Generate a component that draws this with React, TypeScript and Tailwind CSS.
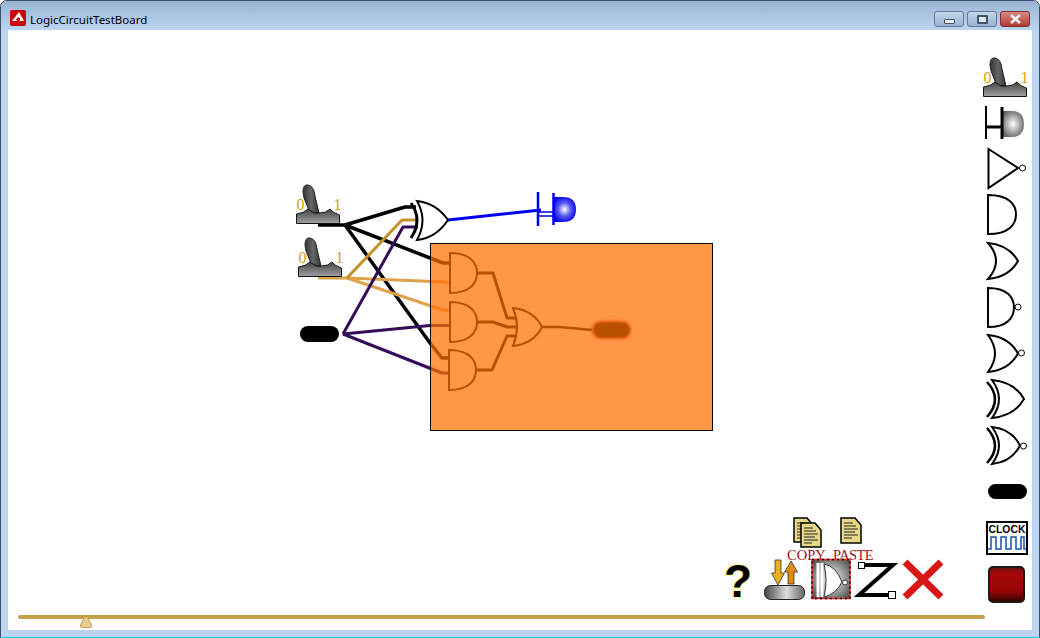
import type { ReactNode } from 'react'

// svg cut from the page, so the paths below can use page coordinates
function Slice({ x, y, w, h, children }: { x: number; y: number; w: number; h: number; children: ReactNode }) {
  return (
    <svg width={w} height={h} viewBox={`${x} ${y} ${w} ${h}`} className="block shrink-0 overflow-visible">
      {children}
    </svg>
  )
}

function Switch({ x, y }: { x: number; y: number }) {
  return (
    <g transform={`translate(${x} ${y})`}>
      <path d="M7 10 Q7 2 12 3 Q18 4 19 14 L23 31 L14 31 L8 16 Z" fill="url(#lever)" stroke="#222" strokeWidth="1" />
      <path d="M0.5 41.5 V32 Q8 31 12 27 L18 31 L24 31 Q30 31 34 27 Q37 31 43.5 33 V41.5 Z" fill="url(#body)" stroke="#111" strokeWidth="1" />
      <text x="0.5" y="28" fontFamily="'Liberation Serif', serif" fontSize="16" fill="#d4a000">0</text>
      <text x="37.5" y="28" fontFamily="'Liberation Serif', serif" fontSize="16" fill="#d4a000">1</text>
    </g>
  )
}

function And({ x, y, w, h }: { x: number; y: number; w: number; h: number }) {
  return <path d={`M${x} ${y} V${y + h} C${x + w * 0.75} ${y + h} ${x + w} ${y + h * 0.75} ${x + w} ${y + h / 2} C${x + w} ${y + h * 0.25} ${x + w * 0.75} ${y} ${x} ${y} Z`} fill="#fff" stroke="#000" strokeWidth="2" />
}

function Or({ x, y, w, h, back }: { x: number; y: number; w: number; h: number; back: number }) {
  const m = y + h / 2
  return <path d={`M${x} ${y} Q${x + w * 0.7} ${y + 2} ${x + w} ${m} Q${x + w * 0.7} ${y + h - 2} ${x} ${y + h} Q${x + back * 2} ${m} ${x} ${y} Z`} fill="#fff" stroke="#000" strokeWidth="2" />
}

function Bubble({ x, y }: { x: number; y: number }) {
  return <circle cx={x} cy={y} r="3" fill="#fff" stroke="#000" strokeWidth="1" />
}

function Defs() {
  return (
    <svg width="0" height="0" className="absolute">
      <defs>
        <linearGradient id="lever" x1="0" y1="0" x2="1" y2="0">
          <stop offset="0" stopColor="#333" />
          <stop offset="0.5" stopColor="#666" />
          <stop offset="1" stopColor="#333" />
        </linearGradient>
        <linearGradient id="body" x1="0" y1="0" x2="0" y2="1">
          <stop offset="0" stopColor="#444" />
          <stop offset="1" stopColor="#a0a0a0" />
        </linearGradient>
        <radialGradient id="blueLed" cx="0.5" cy="0.5" r="0.55">
          <stop offset="0" stopColor="#fff" />
          <stop offset="0.5" stopColor="#5a5af0" />
          <stop offset="1" stopColor="#0000f0" />
        </radialGradient>
        <radialGradient id="grayLed" cx="0.5" cy="0.5" r="0.55">
          <stop offset="0" stopColor="#fff" />
          <stop offset="1" stopColor="#666" />
        </radialGradient>
        <linearGradient id="stop" x1="0" y1="0" x2="0" y2="1">
          <stop offset="0" stopColor="#6a1414" />
          <stop offset="0.2" stopColor="#a80808" />
          <stop offset="0.7" stopColor="#980606" />
          <stop offset="1" stopColor="#300303" />
        </linearGradient>
        <linearGradient id="disk" x1="0" y1="0" x2="1" y2="0">
          <stop offset="0" stopColor="#444" />
          <stop offset="0.55" stopColor="#ddd" />
          <stop offset="1" stopColor="#666" />
        </linearGradient>
        <radialGradient id="gateBg" cx="0.5" cy="0.5" r="0.75">
          <stop offset="0" stopColor="#fff" />
          <stop offset="1" stopColor="#333" />
        </radialGradient>
        <filter id="soft" x="-20%" y="-40%" width="140%" height="180%">
          <feGaussianBlur stdDeviation="1" />
        </filter>
        <filter id="softX" x="-20%" y="-20%" width="140%" height="140%">
          <feGaussianBlur stdDeviation="0.6" />
        </filter>
      </defs>
    </svg>
  )
}

function Circuit() {
  return (
    <Slice x={8} y={30} w={972} h={485}>
      {/* wires */}
      <g fill="none" strokeWidth="3" strokeLinejoin="round">
        <g stroke="#000" strokeWidth="3.5">
          <path d="M318 225 H345 L405 207 H416" />
          <path d="M345 225 L443 263 H450" />
          <path d="M345 225 L430 343 L442 358 H449" />
        </g>
        <g stroke="#dfa24c">
          <path d="M318 278 H347 L445 282 L450 283" />
          <path d="M347 278 L443 310 H450" />
        </g>
        <path d="M347 278 L402 220 H418" stroke="#c4922c" />
        <g stroke="#340c58">
          <path d="M343 334 L403 227 H418" />
          <path d="M343 334 L430 325.5 H449" />
          <path d="M343 334 L442 373 H449" />
        </g>
        <path d="M448 220 L541 210" stroke="#0000f0" />
        <g stroke="#000">
          <path d="M477 273 H493 L507 318 H516" />
          <path d="M477 322 H493 L507 327 H517" />
          <path d="M476 370 H492 L507 336 H516" />
          <path d="M542 327 H560 L592 330" strokeWidth="2.5" />
        </g>
      </g>

      <Switch x={296} y={182} />
      <Switch x={298} y={235} />
      <rect x="300" y="326" width="39" height="16" rx="8" fill="#000" />

      {/* xor */}
      <path d="M411 203 Q423 220 411 238" fill="none" stroke="#000" strokeWidth="3" />
      <path d="M417 201 Q436 203 448 220 Q436 238 417 240 Q428 220 417 201 Z" fill="#fff" stroke="#000" strokeWidth="2" />

      {/* blue led */}
      <path d="M553 197 H563 Q576 197 576 209.5 Q576 222 563 222 H553 Z" fill="url(#blueLed)" />
      <path d="M538 192 V226 M553.5 193 V225" stroke="#0000f0" strokeWidth="2.5" />
      <path d="M538 212 H553 M538 216 H553" stroke="#0000f0" strokeWidth="1.5" />

      {/* sub circuit */}
      <g>
        <And x={450} y={253} w={27} h={40} />
        <And x={450} y={302} w={27} h={40} />
        <And x={449} y={350} w={27} h={40} />
        <Or x={513} y={308} w={29} h={38} back={4} />
        <rect x="591" y="320" width="41" height="20" rx="10" fill="#ff2000" opacity="0.5" filter="url(#soft)" />
        <rect x="593" y="322" width="37" height="16" rx="8" fill="#000" filter="url(#soft)" />
      </g>
      <rect x="430.5" y="243.5" width="282" height="187" fill="#ff6f00" fillOpacity="0.72" stroke="#000" strokeWidth="1" />
    </Slice>
  )
}

function Palette() {
  return (
    <div className="flex flex-col w-[52px] shrink-0">
      <Slice x={980} y={30} w={52} h={72}><Switch x={983} y={55} /></Slice>
      <Slice x={980} y={102} w={52} h={43}>
        <path d="M1002 111 H1012 Q1024 111 1024 124 Q1024 137 1012 137 H1002 Z" fill="url(#grayLed)" />
        <path d="M986 106 V139" stroke="#000" strokeWidth="2" />
        <path d="M1002 107 V139" stroke="#000" strokeWidth="3" />
        <path d="M986 127 H1002" stroke="#000" strokeWidth="3" />
      </Slice>
      <Slice x={980} y={145} w={52} h={46}>
        <path d="M988.5 149 V188 L1018 168 Z" fill="#fff" stroke="#000" strokeWidth="2" />
        <Bubble x={1022.5} y={168} />
      </Slice>
      <Slice x={980} y={191} w={52} h={47}><And x={988} y={195} w={28} h={39} /></Slice>
      <Slice x={980} y={238} w={52} h={46}><Or x={988} y={243} w={30} h={36} back={8} /></Slice>
      <Slice x={980} y={284} w={52} h={48}>
        <And x={988} y={288} w={26} h={39} />
        <Bubble x={1018} y={307} />
      </Slice>
      <Slice x={980} y={332} w={52} h={44}>
        <Or x={988} y={335} w={30} h={37} back={7} />
        <Bubble x={1021.5} y={353} />
      </Slice>
      <Slice x={980} y={376} w={52} h={48}>
        <path d="M987 382 Q1003 399 987 417" fill="none" stroke="#000" strokeWidth="2.5" />
        <Or x={992} y={380} w={32} h={38} back={7} />
      </Slice>
      <Slice x={980} y={424} w={52} h={48}>
        <path d="M987 428 Q1003 446 987 463" fill="none" stroke="#000" strokeWidth="2.5" />
        <Or x={992} y={427} w={28} h={37} back={7} />
        <Bubble x={1023.5} y={446} />
      </Slice>
      <Slice x={980} y={472} w={52} h={40}><rect x="988" y="484" width="39" height="15" rx="7.5" fill="#000" /></Slice>
      <Slice x={980} y={512} w={52} h={48}>
        <rect x="987" y="522" width="40" height="32" fill="#fff" stroke="#000" strokeWidth="2" />
        <text x="988.5" y="533" fontFamily="'Liberation Sans', sans-serif" fontWeight="700" fontSize="11" textLength="37" lengthAdjust="spacingAndGlyphs" fill="#000">CLOCK</text>
        <path d="M988 549 H991 V537 H996 V549 H1001 V537 H1006 V549 H1011 V537 H1016 V549 H1021 V537 H1024 V549 H1026" fill="none" stroke="#1450b0" strokeWidth="1.5" />
      </Slice>
      <Slice x={980} y={560} w={52} h={50}>
        <rect x="989" y="567" width="35" height="35" rx="4" fill="url(#stop)" stroke="#1a1a1a" strokeWidth="2" />
      </Slice>
    </div>
  )
}

function Doc({ x, y, w, h }: { x: number; y: number; w: number; h: number }) {
  return (
    <g>
      <path d={`M${x} ${y} H${x + w - 6} L${x + w} ${y + 7} V${y + h} H${x} Z`} fill="#e8d888" stroke="#000" strokeWidth="1.5" />
      <path d={`M${x + 3} ${y + 5} H${x + w - 8} M${x + 3} ${y + 8} H${x + w - 5} M${x + 3} ${y + 11} H${x + w - 3} M${x + 3} ${y + 14} H${x + w - 6} M${x + 3} ${y + 17} H${x + w - 3} M${x + 3} ${y + 20} H${x + w - 9}`} stroke="#222" strokeWidth="1.2" />
    </g>
  )
}

function Toolbar() {
  return (
    <div className="flex flex-col">
      <div className="flex ml-[779px] text-[#9a1414] [font-family:'Liberation_Serif',serif]">
        <div className="flex flex-col w-[46px]">
          <Slice x={787} y={515} w={46} h={33}>
            <Doc x={794} y={518} w={19} h={24} />
            <Doc x={801} y={523} w={20} h={24} />
          </Slice>
          <div className="h-[11px] leading-[14px] text-[14.5px] whitespace-nowrap">COPY</div>
        </div>
        <div className="flex flex-col w-[41px]">
          <Slice x={833} y={515} w={41} h={33}>
            <Doc x={841} y={518} w={20} h={25} />
          </Slice>
          <div className="h-[11px] leading-[14px] text-[14.5px] tracking-[-0.6px] whitespace-nowrap">PASTE</div>
        </div>
      </div>
      <div className="flex ml-[712px]">
        <Slice x={720} y={559} w={37} h={51}>
          <text x="724" y="597" fontFamily="'Liberation Sans', sans-serif" fontWeight="700" fontSize="46" fill="#000" stroke="#fff59a" strokeWidth="2.5" paintOrder="stroke">?</text>
        </Slice>
        <Slice x={757} y={559} w={51} h={51}>
          <rect x="764.5" y="585.5" width="40" height="14" rx="6" fill="url(#disk)" stroke="#222" />
          <path d="M775 560 H781 V573 H784.5 L778 585 L771.5 573 H775 Z" fill="#e8b020" stroke="#333" strokeWidth="0.8" />
          <path d="M788 584 H794 V572 H797.5 L791 561 L784.5 572 H788 Z" fill="#e08a10" stroke="#333" strokeWidth="0.8" />
        </Slice>
        <Slice x={808} y={559} w={46} h={51}>
          <rect x="812" y="559.5" width="38" height="39" fill="url(#gateBg)" stroke="#ff2020" strokeWidth="1.5" />
          <rect x="812" y="559.5" width="38" height="39" fill="none" stroke="#000" strokeWidth="1.5" strokeDasharray="2 3" />
          <path d="M818 563 V597 M822 563 V597" stroke="#fff" strokeWidth="3" />
          <path d="M824 564 Q836 566 842 582 Q836 594 824 597 Q828 580 824 564 Z" fill="#fff" stroke="#333" strokeWidth="1" />
          <circle cx="845" cy="582.5" r="2.5" fill="#fff" stroke="#333" />
        </Slice>
        <Slice x={854} y={559} w={46} h={51}>
          <path d="M863 565 H893 L859 595 H892" fill="none" stroke="#000" strokeWidth="4" />
          <rect x="858.5" y="562.5" width="6" height="6" fill="#fff" stroke="#000" />
          <rect x="888.5" y="591.5" width="7" height="7" fill="#fff" stroke="#000" />
        </Slice>
        <Slice x={900} y={559} w={50} h={51}>
          <path d="M905 562 L941 597 M941 562 L905 597" stroke="#d81818" strokeWidth="7" filter="url(#softX)" />
        </Slice>
      </div>
    </div>
  )
}

function WindowButton({ children, className }: { children: ReactNode; className: string }) {
  return <div className={`h-[16px] w-[30px] rounded-[3px] border flex items-center justify-center ${className}`}>{children}</div>
}

export default function App() {
  return (
    <div className="w-[1040px] h-[638px] bg-white overflow-hidden">
      <Defs />
      <div className="h-full flex flex-col rounded-t-[7px] border border-[#3a5068] border-b-[#1cc4d8] bg-[#bcd4f0]">
        <div className="h-[29px] shrink-0 flex items-start rounded-t-[6px] bg-linear-to-b from-[#9ab5d4] to-[#bcd4f0] pl-[9px] pr-[9px]">
          <svg width="16" height="16" viewBox="0 0 16 16" className="mt-[9px] shrink-0">
            <rect width="16" height="16" rx="2" fill="#c80808" />
            <path d="M9 2 L2 11 H7 L6 9 L9 7 L10 11 H14 Z" fill="#fff" />
            <path d="M8 8 H10 V10 H8 Z" fill="#c80808" />
          </svg>
          <span className="ml-[4px] mt-[11px] text-[11.5px] leading-[16px] text-black [font-family:'Noto_Sans',sans-serif]">LogicCircuitTestBoard</span>
          <div className="ml-auto mt-[10px] flex gap-[3px]">
            <WindowButton className="border-[#5f7a9e] bg-linear-to-b from-[#c4d6ea] to-[#98b2d0]">
              <div className="w-[11px] h-[5px] mt-[5px] bg-[#e8eef5] border border-[#44546a] rounded-[1px]" />
            </WindowButton>
            <WindowButton className="border-[#5f7a9e] bg-linear-to-b from-[#c4d6ea] to-[#98b2d0]">
              <div className="w-[11px] h-[9px] bg-[#dfe7f0] border-2 border-[#44546a] rounded-[1px]" />
            </WindowButton>
            <WindowButton className="border-[#7a3030] bg-linear-to-b from-[#d88a80] to-[#b03a30]">
              <svg width="13" height="10" viewBox="0 0 13 10">
                <path d="M2 1 L11 9 M11 1 L2 9" stroke="#f4f0ee" strokeWidth="2.6" />
              </svg>
            </WindowButton>
          </div>
        </div>
        <div className="flex-1 mx-[7px] mb-[7px] bg-white flex flex-col">
          <div className="flex h-[580px]">
            <div className="w-[972px] flex flex-col">
              <Circuit />
              <Toolbar />
            </div>
            <Palette />
          </div>
          <div className="pl-[10px] pr-[47px] pt-[5px]">
            <div className="relative h-[4px] rounded-full bg-[#c8a048]">
              <svg width="14" height="12" viewBox="0 0 14 12" className="absolute left-[61px] top-[1px]">
                <path d="M7 0.5 Q9 1 10.5 5 L12.5 9 Q13 11.5 11 11.5 H3 Q1 11.5 1.5 9 L3.5 5 Q5 1 7 0.5 Z" fill="#e8cc98" stroke="#c8a048" />
              </svg>
            </div>
          </div>
        </div>
      </div>
    </div>
  )
}
